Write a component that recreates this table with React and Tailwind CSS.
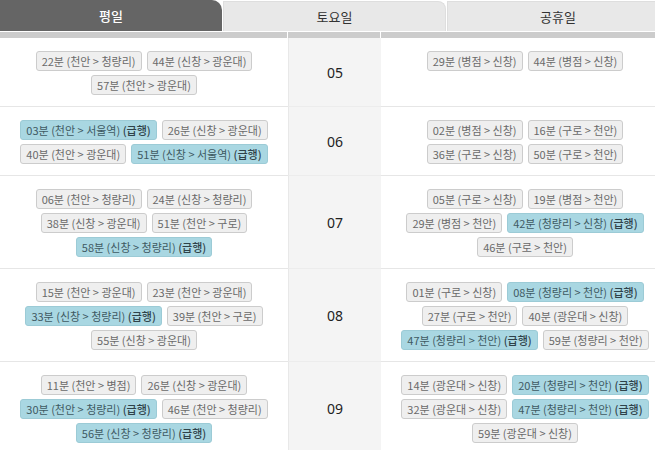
import React from "react";

const schedule = [
  {
    hour: "05",
    weekday: [
      ["22분 (천안 > 청량리)"],
      ["44분 (신창 > 광운대)"],
      ["57분 (천안 > 광운대)"],
    ],
    holiday: [["29분 (병점 > 신창)"], ["44분 (병점 > 신창)"]],
  },
  {
    hour: "06",
    weekday: [
      ["03분 (천안 > 서울역)", true],
      ["26분 (신창 > 광운대)"],
      ["40분 (천안 > 광운대)"],
      ["51분 (신창 > 서울역)", true],
    ],
    holiday: [
      ["02분 (병점 > 신창)"],
      ["16분 (구로 > 천안)"],
      ["36분 (구로 > 신창)"],
      ["50분 (구로 > 천안)"],
    ],
  },
  {
    hour: "07",
    weekday: [
      ["06분 (천안 > 청량리)"],
      ["24분 (신창 > 청량리)"],
      ["38분 (신창 > 광운대)"],
      ["51분 (천안 > 구로)"],
      ["58분 (신창 > 청량리)", true],
    ],
    holiday: [
      ["05분 (구로 > 신창)"],
      ["19분 (병점 > 천안)"],
      ["29분 (병점 > 천안)"],
      ["42분 (청량리 > 신창)", true],
      ["46분 (구로 > 천안)"],
    ],
  },
  {
    hour: "08",
    weekday: [
      ["15분 (천안 > 광운대)"],
      ["23분 (천안 > 광운대)"],
      ["33분 (신창 > 청량리)", true],
      ["39분 (천안 > 구로)"],
      ["55분 (신창 > 광운대)"],
    ],
    holiday: [
      ["01분 (구로 > 신창)"],
      ["08분 (청량리 > 천안)", true],
      ["27분 (구로 > 천안)"],
      ["40분 (광운대 > 신창)"],
      ["47분 (청량리 > 천안)", true],
      ["59분 (청량리 > 천안)"],
    ],
  },
  {
    hour: "09",
    weekday: [
      ["11분 (천안 > 병점)"],
      ["26분 (신창 > 광운대)"],
      ["30분 (천안 > 청량리)", true],
      ["46분 (천안 > 청량리)"],
      ["56분 (신창 > 청량리)", true],
    ],
    holiday: [
      ["14분 (광운대 > 신창)"],
      ["20분 (청량리 > 천안)", true],
      ["32분 (광운대 > 신창)"],
      ["47분 (청량리 > 천안)", true],
      ["59분 (광운대 > 신창)"],
    ],
  },
];

const Chip = ({ text, express }) => (
  <span
    className={`inline-block h-[20px] px-[5px] rounded-[3px] border text-[11px] leading-[18px] whitespace-nowrap ${
      express
        ? "bg-[#a9d7e2] border-[#9ccbd6] text-[#3f5a62]"
        : "bg-[#efefef] border-[#cccccc] text-[#6a6a6a]"
    }`}
  >
    {text}
    {express && <span className="font-medium text-[#2f4249]"> (급행)</span>}
  </span>
);

const Cell = ({ items }) => (
  <div className="w-[288px] shrink-0 px-[10px] pt-[13px] pb-[11px] flex flex-wrap justify-center content-start gap-x-[5px] gap-y-[4px] border-b border-[#e6e6e6]">
    {items.map(([text, express]) => (
      <Chip key={text} text={text} express={express} />
    ))}
  </div>
);

export default function App() {
  return (
    <div
      className="w-full overflow-hidden bg-white h-[450px]"
      style={{ fontFamily: '"Noto Sans CJK KR", "Noto Sans", sans-serif' }}
    >
      <div className="w-[669px]">
        {/* tabs */}
        <div className="flex gap-px h-[31px] text-[13px]">
          <div className="w-[222px] bg-[#656565] rounded-tr-[10px] flex items-center justify-center text-white font-medium">
            평일
          </div>
          <div className="w-[223px] mt-px bg-[#e8e8e8] border border-[#dedede] border-b-0 rounded-tr-[8px] flex items-center justify-center text-[#333]">
            토요일
          </div>
          <div className="flex-1 mt-px bg-[#e8e8e8] border border-[#dedede] border-b-0 flex items-center justify-center text-[#333]">
            공휴일
          </div>
        </div>
        <div className="flex gap-px mt-px h-[6px]">
          <div className="w-[287px] bg-[#cccccc]" />
          <div className="w-[92px] bg-[#cccccc]" />
          <div className="flex-1 bg-[#cccccc]" />
        </div>

        {schedule.map((row) => (
          <div key={row.hour} className="flex">
            <Cell items={row.weekday} />
            <div className="w-[93px] shrink-0 bg-[#f4f4f4] border-l border-[#e8e8e8] border-b border-b-[#ececec] flex items-center justify-center text-[14px] text-[#222]" style={{ fontFamily: '"Noto Sans", sans-serif' }}>
              {row.hour}
            </div>
            <Cell items={row.holiday} />
          </div>
        ))}
      </div>
    </div>
  );
}
